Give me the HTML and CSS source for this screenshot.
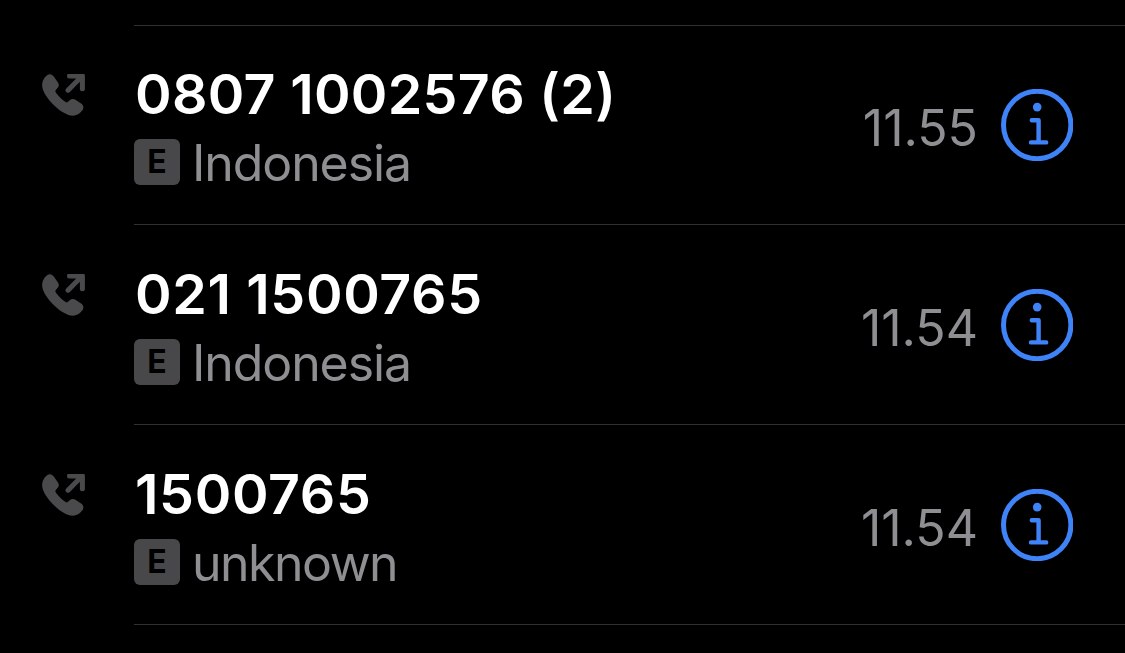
FILE: index.html
```html
<!DOCTYPE html>
<html lang="id">
<head>
    <meta charset="UTF-8">
    <meta name="viewport" content="width=device-width, initial-scale=1.0">
    <title>Recents</title>
    <link rel="stylesheet" href="styles.css">
</head>
<body>
    <!-- Shared icons -->
    <svg class="sprite">
        <symbol id="outgoing" viewBox="0 0 44 44">
            <path class="fill" transform="translate(0 -.3) scale(.98)" d="M5.2 1.6C7.8-.5 10.300.4 12.200 3L16.300 9C17.700 11.100 17.400 13.100 15.700 14.900L14.200 16.500C13.500 17.300 13.500 18.100 14 19C15.200 21.300 21.400 27.500 24.200 29C25.100 29.500 25.900 29.400 26.600 28.700L28.200 27.200C30 25.500 32 25.200 34.200 26.600L39.900 30.500C42.500 32.300 42.900 35 41.200 37.400C38.700 41.100 35.200 43 31.200 42.900C26.100 42.800 19.100 39 12.200 32.300C5.300 25.500.3 17.700.1 11.800C0 7.800 1.800 4.400 5.200 1.600Z"/>
            <path class="line" d="M27.500 1.900H40.400V14.800M40.200 2.100L26 16.200"/>
        </symbol>
        <symbol id="info" viewBox="0 0 72 72">
            <circle class="line" cx="36.200" cy="36" r="33.700"/>
            <circle class="fill" cx="36.200" cy="18.100" r="4.300"/>
            <path class="line stem" d="M30.800 31.200H37.600V53.400M30 53.400H45.200"/>
        </symbol>
    </svg>

    <ul class="calls">
        <li class="call">
            <svg class="outgoing"><use href="#outgoing"/></svg>
            <div class="content">
                <div class="caller">
                    <div class="number counted">0807 1002576 (2)</div>
                    <div class="details"><span class="badge">E</span><span class="place">Indonesia</span></div>
                </div>
                <span class="time">11.55</span>
                <svg class="info"><use href="#info"/></svg>
            </div>
        </li>
        <li class="call">
            <svg class="outgoing"><use href="#outgoing"/></svg>
            <div class="content">
                <div class="caller">
                    <div class="number">021 1500765</div>
                    <div class="details"><span class="badge">E</span><span class="place">Indonesia</span></div>
                </div>
                <span class="time">11.54</span>
                <svg class="info"><use href="#info"/></svg>
            </div>
        </li>
        <li class="call">
            <svg class="outgoing"><use href="#outgoing"/></svg>
            <div class="content">
                <div class="caller">
                    <div class="number">1500765</div>
                    <div class="details"><span class="badge">E</span><span class="place unknown">unknown</span></div>
                </div>
                <span class="time">11.54</span>
                <svg class="info"><use href="#info"/></svg>
            </div>
        </li>
    </ul>
</body>
</html>
```

FILE: styles.css
```css
body {
    margin: 0;
    overflow: hidden;
    background-color: #000;
    font-family: Inter, "Liberation Sans", sans-serif;
}

.sprite {
    display: none;
}

.calls {
    margin: 0;
    padding: 25px 0 0;
    list-style: none;
}

.call {
    display: flex;
    height: 200px;
    padding-left: 42px;
}

.outgoing {
    flex: none;
    width: 44px;
    height: 44px;
    margin: 49px 48px 0 0;
    color: #4a4a4d;
}

.content {
    display: flex;
    flex: 1;
    border-top: 1px solid transparent;
    border-bottom: 1px solid #303032;
}

.call:first-child .content {
    border-top-color: #303032;
}

.caller {
    flex: 1;
    padding-top: 33px;
}

.number {
    height: 70px;
    padding-left: 1px;
    color: #fff;
    font-size: 55.5px;
    font-weight: 600;
    font-feature-settings: "calt" 0;
    letter-spacing: 0.65px;
    line-height: 70px;
    white-space: nowrap;
}

.counted {
    letter-spacing: 0.3px;
}

.details {
    display: flex;
    align-items: center;
    height: 68px;
}

.badge {
    width: 46px;
    height: 46px;
    margin: 0 12px 2px 0;
    border-radius: 6px;
    background-color: #48484b;
    color: #000;
    font-size: 32px;
    font-weight: 700;
    line-height: 46px;
    text-align: center;
}

.place,
.time {
    color: #8e8e93;
    font-size: 50px;
    line-height: 60px;
}

.place {
    letter-spacing: -1.1px;
}

.unknown {
    letter-spacing: -1.5px;
}

.time {
    margin: 72px 23px 0 0;
}

.info {
    flex: none;
    width: 72px;
    height: 72px;
    margin: 63px 52px 0 0;
    overflow: visible;
    color: #3f83f8;
}

.fill {
    fill: currentColor;
}

.line {
    fill: none;
    stroke: currentColor;
    stroke-width: 5;
    stroke-linecap: round;
    stroke-linejoin: round;
}

.stem {
    stroke-width: 4.4;
}

.outgoing .line {
    stroke-width: 3.8;
}
```
